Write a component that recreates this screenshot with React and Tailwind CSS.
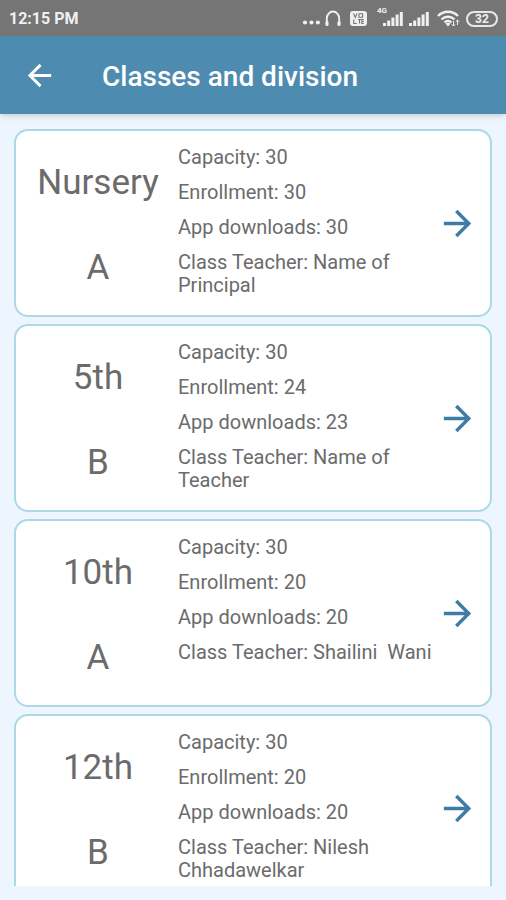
import { MdArrowBack, MdArrowForward } from 'react-icons/md'

const classes = [
  { name: 'Nursery', division: 'A', capacity: 30, enrollment: 30, downloads: 30, teacher: 'Name of Principal' },
  { name: '5th', division: 'B', capacity: 30, enrollment: 24, downloads: 23, teacher: 'Name of Teacher' },
  { name: '10th', division: 'A', capacity: 30, enrollment: 20, downloads: 20, teacher: 'Shailini  Wani' },
  { name: '12th', division: 'B', capacity: 30, enrollment: 20, downloads: 20, teacher: 'Nilesh Chhadawelkar' },
]

const MoreIcon = () => (
  <svg className="h-5 w-[18px]" viewBox="0 0 18 20" fill="currentColor" aria-hidden="true">
    <circle cx="3" cy="13.5" r="2.1" />
    <circle cx="9.5" cy="13.5" r="2.1" />
    <circle cx="15.9" cy="13.5" r="2.1" />
  </svg>
)

const HeadphonesIcon = () => (
  <svg className="h-5 w-[18px]" viewBox="0 0 18 20" fill="none" stroke="currentColor" aria-hidden="true">
    <path d="M2.8 15V9.5a6.2 7 0 0 1 12.4 0V15" strokeWidth="1.9" />
    <path d="M3 13.5v2M15 13.500v2" strokeWidth="3.2" strokeLinecap="round" />
  </svg>
)

const VolteIcon = () => (
  <svg className="h-5 w-[17px]" viewBox="0 0 17 20" aria-hidden="true">
    <rect x="0" y="2" width="17" height="15" rx="3" fill="currentColor" />
    <path d="M3.5 4.5l1.8 4 1.8-4M9 4.800h3.600v3.400H9zM3.800 10.500v4h3M8 10.500h3M9.500 10.500v4M13.800 10.500h-2v4h2M11.800 12.500h2" fill="none" stroke="#757575" strokeWidth="1.1" />
  </svg>
)

const SignalIcon = () => (
  <svg className="h-5 w-5" viewBox="0 0 20 20" fill="currentColor" aria-hidden="true">
    <path d="M0 14h3v3H0zM4.2 11.5h3V17h-3zM8.4 8.5h3V17h-3zM12.6 5.5h3V17h-3zM16.8 3h3v14h-3z" />
  </svg>
)

const WifiIcon = () => (
  <svg className="h-5 w-[23px]" viewBox="0 0 23 20" fill="none" stroke="currentColor" aria-hidden="true">
    <path d="M1 7a14 14 0 0 1 20 0M4.5 10.5a9.2 9.2 0 0 1 13 0M7.5 13.5a5 5 0 0 1 7 0" strokeWidth="2.4" />
    <path d="M8.5 14.5a4 4 0 0 1 5 0L11 17.5z" fill="currentColor" stroke="none" />
    <path d="M16.5 12v5M14.8 15.3l1.7 1.7 1.7-1.7M20.5 16v-5M18.8 12.7l1.7-1.7 1.7 1.7" strokeWidth="1" />
  </svg>
)

const StatusBar = () => (
  <div className="flex h-9 shrink-0 items-center justify-between bg-[#757575] pt-px pr-2 pl-[9px] text-[#f0f0f0]">
    <span className="text-base font-bold">12:15 PM</span>
    <div className="flex items-center">
      <MoreIcon />
      <div className="ml-1">
        <HeadphonesIcon />
      </div>
      <div className="ml-2">
        <VolteIcon />
      </div>
      <div className="relative ml-4">
        <span className="absolute -top-1 -left-1.5 text-[8px] leading-3 font-bold">4G</span>
        <SignalIcon />
      </div>
      <div className="ml-1.5">
        <SignalIcon />
      </div>
      <div className="ml-2">
        <WifiIcon />
      </div>
      <span className="ml-1.5 flex h-4 w-8 items-center justify-center rounded-full border-2 border-[#e8e8e8] text-xs font-bold">
        32
      </span>
    </div>
  </div>
)

const Header = () => (
  <header className="z-10 flex h-[78px] shrink-0 items-center bg-[#4e8bb0] pl-[22px] text-white shadow-md">
    <button type="button" aria-label="Back">
      <MdArrowBack className="size-[35px]" />
    </button>
    <h1 className="ml-[45px] pt-1 text-[28px] leading-9 font-medium">Classes and division</h1>
  </header>
)

const ClassCard = ({ item }) => (
  <li className="flex min-h-[188px] rounded-[14px] border-2 border-[#add8e6] bg-white text-[#6b6b6b]">
    <div className="flex w-[162px] shrink-0 flex-col items-center gap-[43px] pt-[31px] pl-0.5 text-[35px] leading-[42px]">
      <h2>{item.name}</h2>
      <p>{item.division}</p>
    </div>
    <div className="flex min-w-0 flex-1 flex-col gap-3 pt-[15px] text-xl leading-[23px] whitespace-pre-wrap">
      <p>{`Capacity: ${item.capacity}`}</p>
      <p>{`Enrollment: ${item.enrollment}`}</p>
      <p>{`App downloads: ${item.downloads}`}</p>
      <p>{`Class Teacher: ${item.teacher}`}</p>
    </div>
    <a href="#" aria-label={`Open ${item.name} ${item.division}`} className="flex items-center pr-3 text-[#3c7ca5]">
      <MdArrowForward className="size-[41px]" />
    </a>
  </li>
)

const App = () => {
  return (
    <div className="flex h-screen flex-col bg-[#edf6fe] pb-3.5 font-['Roboto',sans-serif]">
      <StatusBar />
      <Header />
      <main className="min-h-0 flex-1 overflow-y-auto px-3.5 pt-[15px] [scrollbar-width:none]">
        <ul className="flex flex-col gap-[7px]">
          {classes.map((item) => (
            <ClassCard key={item.name} item={item} />
          ))}
        </ul>
      </main>
    </div>
  )
}

export default App
